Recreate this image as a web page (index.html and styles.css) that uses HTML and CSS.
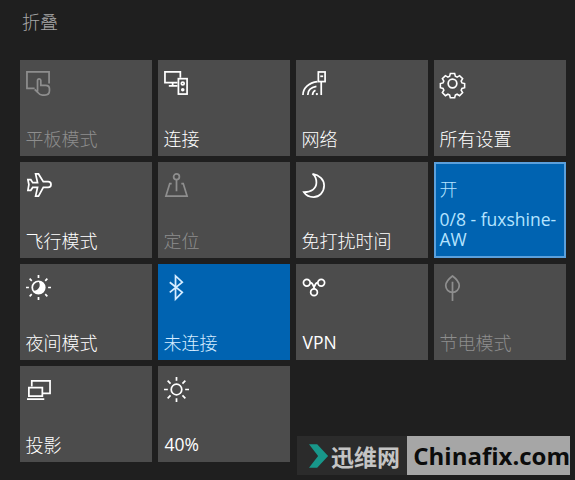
FILE: index.html
```html
<!DOCTYPE html>
<html lang="zh-CN">
<head>
    <meta charset="UTF-8">
    <title>操作中心</title>
    <link rel="stylesheet" href="styles.css">
</head>
<body>

<div class="panel">
    <div class="collapse">折叠</div>

    <div class="tiles">
        <!-- row 1 -->
        <div class="tile off">
            <svg class="icon" viewBox="0 0 26 26"><path d="M9 18H1V1h23v12"/><path d="M12 21v-11a1.700 1.700 0 0 1 3.400 0v5h5c2.500 0 4 1.500 4 3.500v2c0 3-2 4.500-5 4.500h-2.400c-2 0-3.500-1-4.500-2.500L9 19"/></svg>
            <div class="label">平板模式</div>
        </div>
        <div class="tile">
            <svg class="icon" viewBox="0 0 26 26"><path d="M14 12H1V1h16v6"/><path d="M5 15.500h9M9 12v3.500"/><rect x="15" y="8" width="9" height="16"/><circle cx="19.500" cy="13" r="1.500"/><circle cx="19.500" cy="19.500" r="1"/></svg>
            <div class="label">连接</div>
        </div>
        <div class="tile">
            <svg class="icon" viewBox="0 0 26 26"><path d="M1 25C1 18 7 12 16 11"/><path d="M6 25c0-5 3-8 9-9"/><path d="M11 25c0-3 1-4 3-5"/><path d="M20 25V11"/><rect x="17" y="1" width="7" height="10"/><path d="M19 5.500h3"/><circle class="dot" cx="15.500" cy="24" r="1.200"/></svg>
            <div class="label">网络</div>
        </div>
        <div class="tile">
            <svg class="icon" viewBox="0 0 26 26"><circle cx="13" cy="13" r="4.500"/><path d="M10.500 1.500h5l.8 3.200 2 .9 2.900-1.700 3.500 3.500-1.700 2.900.9 2 3.100.8v4.800l-3.100.8-.9 2 1.700 2.900-3.500 3.500-2.900-1.700-2 .9-.8 3.200h-5l-.8-3.200-2-.9-2.900 1.700-3.500-3.500 1.700-2.900-.9-2-3.100-.8v-4.800l3.100-.8.900-2-1.700-2.900 3.500-3.500 2.900 1.700 2-.9z" transform="translate(1.300 1.300) scale(.9)"/></svg>
            <div class="label">所有设置</div>
        </div>

        <!-- row 2 -->
        <div class="tile">
            <svg class="icon" viewBox="0 0 26 26"><path d="M10 1h3l5 8h5c2 0 3 1.500 3 3s-1 3-3 3h-5l-5 9h-3l2-9H7l-2 3H2l1-6-1-5h3l2 3h5z"/></svg>
            <div class="label">飞行模式</div>
        </div>
        <div class="tile off">
            <svg class="icon" viewBox="0 0 26 26"><circle cx="13" cy="4" r="3"/><path d="M13 7v12"/><path d="M8 11H6L2 24h22l-4-13h-2"/></svg>
            <div class="label">定位</div>
        </div>
        <div class="tile">
            <svg class="icon" viewBox="0 0 26 26"><path d="M11 1c7 1 12 6 12 12 0 7-5 12-11 12-4 0-8-2-10-5 8 0 13-4 13-10 0-4-1-7-4-9z"/></svg>
            <div class="label">免打扰时间</div>
        </div>
        <div class="tile hotspot">
            <div class="hotspot-title">开</div>
            <div class="hotspot-name">0/8 - fuxshine-AW</div>
        </div>

        <!-- row 3 -->
        <div class="tile">
            <svg class="icon" viewBox="0 0 26 26"><circle cx="13" cy="13" r="6.500"/><path class="dot" d="M13 6.500a6.500 6.500 0 0 1 0 13c-2.500 0-4.500-1.300-5.700-3.200C12 17 16.500 12 13 6.500z"/><path d="M13 0v3M13 23v3M0 13h3M23 13h3M3.800 3.800 6 6M20 20l2.200 2.200M3.800 22.200 6 20M20 6l2.200-2.200"/></svg>
            <div class="label">夜间模式</div>
        </div>
        <div class="tile on">
            <svg class="icon" viewBox="0 0 26 26"><path d="M6 7.500l13 10.500-7 7V1l7 6.500L6 18"/></svg>
            <div class="label">未连接</div>
        </div>
        <div class="tile">
            <svg class="icon" viewBox="0 0 26 26"><g transform="translate(0 3)"><circle cx="5" cy="5" r="3.500"/><circle cx="20" cy="5" r="3.500"/><circle cx="12.500" cy="15" r="3.500"/><path d="M8.500 5c3 0 3 3 4.500 6.500M16.500 5c-3 0-3 3-4.500 6.500"/></g></svg>
            <div class="label latin">VPN</div>
        </div>
        <div class="tile off">
            <svg class="icon" viewBox="0 0 26 26"><path d="M13 1c4 3 7 6 7 10 0 4-3 7-7 7s-7-3-7-7c0-4 3-7 7-10z"/><path d="M13 7v20"/></svg>
            <div class="label">节电模式</div>
        </div>

        <!-- row 4 -->
        <div class="tile">
            <svg class="icon" viewBox="0 0 26 26"><path d="M6 10V4h19v13h-8"/><path d="M3 11h14v9H3z"/><path d="M1 23h18"/></svg>
            <div class="label">投影</div>
        </div>
        <div class="tile">
            <svg class="icon" viewBox="0 0 26 26"><circle cx="13" cy="13" r="5.500"/><path d="M13 0v4M13 22v4M0 13h4M22 13h4M3.800 3.800l3 3M19.200 19.200l3 3M3.800 22.200l3-3M19.200 6.800l3-3"/></svg>
            <div class="label latin">40%</div>
        </div>
    </div>

    <!-- site watermark over the corner of the shot -->
    <div class="watermark">
        <div class="wm-left">
            <svg class="wm-arrow" viewBox="0 0 22 26"><path d="M0 0h9l12 13L9 26H0l10-13z"/></svg>
            <span>迅维网</span>
        </div>
        <div class="wm-right">Chinafix.com</div>
    </div>
</div>

</body>
</html>
```

FILE: styles.css
```css
* {
    box-sizing: border-box;
}
html, body {
    margin: 0;
    height: 100%;
}
body {
    background-color: #1f1f1f;
    color: #fff;
    font-family: "Noto Sans CJK SC", "Liberation Sans", sans-serif;
    font-weight: 300;
    overflow: hidden;
}
.panel {
    position: relative;
    width: 575px;
    height: 480px;
    padding: 9px 9px 0 20px;
}
.collapse {
    height: 24px;
    padding-left: 2px;
    margin-bottom: 27px;
    font-size: 18px;
    line-height: 24px;
    color: #a8a8a8;
}
.tiles {
    display: grid;
    grid-template-columns: repeat(4, 132px);
    grid-auto-rows: 96px;
    gap: 6px;
}
.tile {
    display: flex;
    flex-direction: column;
    justify-content: space-between;
    padding: 11px 6px 5px 5.500px;
    background-color: #4c4c4c;
}
.icon {
    display: block;
    width: 25px;
    height: 25px;
    margin-left: 0.500px;
    overflow: visible;
    fill: none;
    stroke: #fff;
    stroke-width: 1.800;
}
.icon .dot {
    fill: #fff;
    stroke: none;
}
.label {
    font-size: 18px;
    line-height: 26px;
    white-space: nowrap;
}
.label.latin {
    padding-left: 1px;
    font-family: "Open Sans", "Liberation Sans", sans-serif;
    font-weight: 400;
    font-size: 17.500px;
}
.off .icon {
    stroke: #8e8e8e;
}
.off .label {
    color: #8e8e8e;
}
.on {
    background-color: #0063b1;
}
.on .label {
    color: #d5ecff;
}
.on .icon {
    stroke: #d5ecff;
}
.hotspot {
    padding: 11px 3px 4px 3.500px;
    background-color: #0063b1;
    border: 2px solid #5ba0dc;
    color: #b5e3ff;
    justify-content: flex-start;
}
.hotspot-title {
    font-size: 18px;
    line-height: 26px;
    margin-bottom: 8px;
}
.hotspot-name {
    font-family: "Open Sans", "Liberation Sans", sans-serif;
    font-weight: 400;
    font-size: 17.500px;
    line-height: 20px;
}
.watermark {
    position: absolute;
    left: 297px;
    top: 436px;
    display: flex;
    width: 273px;
    height: 39px;
}
.wm-left {
    display: flex;
    align-items: center;
    gap: 2px;
    width: 111px;
    padding-left: 12px;
    background-color: #2b2b2b;
    color: #c4c4c4;
    font-size: 23px;
    font-weight: 700;
    white-space: nowrap;
}
.wm-arrow {
    width: 20px;
    height: 26px;
    fill: #18978a;
    flex: none;
}
.wm-right {
    flex: 1;
    padding-left: 6px;
    background-color: #a6a6a6;
    color: #0c0c0c;
    font-family: "Open Sans", "Liberation Sans", sans-serif;
    font-size: 24px;
    font-weight: 700;
    line-height: 39px;
    white-space: nowrap;
}
```
